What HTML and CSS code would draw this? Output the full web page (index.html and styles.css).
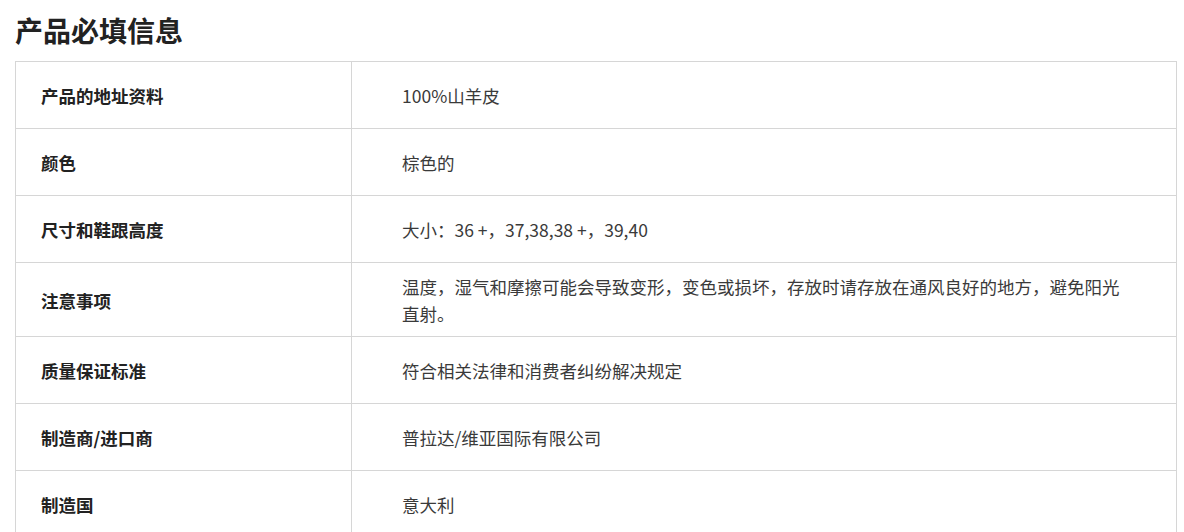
FILE: index.html
```html
<!DOCTYPE html>
<html lang="zh-CN">
<head>
<meta charset="utf-8">
<title>产品必填信息</title>
<link rel="stylesheet" href="styles.css">
</head>
<body>
<section class="info">
  <h2 class="info-title">产品必填信息</h2>
  <table class="info-table">
    <tbody>
      <tr><th>产品的地址资料</th><td>100%山羊皮</td></tr>
      <tr><th>颜色</th><td>棕色的</td></tr>
      <tr><th>尺寸和鞋跟高度</th><td>大小：36 +，37,38,38 +，39,40</td></tr>
      <tr><th>注意事项</th><td>温度，湿气和摩擦可能会导致变形，变色或损坏，存放时请存放在通风良好的地方，避免阳光直射。</td></tr>
      <tr><th>质量保证标准</th><td>符合相关法律和消费者纠纷解决规定</td></tr>
      <tr><th>制造商/进口商</th><td>普拉达/维亚国际有限公司</td></tr>
      <tr><th>制造国</th><td>意大利</td></tr>
    </tbody>
  </table>
</section>
</body>
</html>
```

FILE: styles.css
```css
html, body {
  margin: 0;
  padding: 0;
  background: #fff;
}
body {
  font-family: "Noto Sans CJK SC", "Noto Sans", sans-serif;
  color: #333;
}
.info {
  padding: 0 8px 0 15px;
}
.info-title {
  margin: 0;
  padding-top: 12px;
  height: 61px;
  box-sizing: border-box;
  font-size: 28px;
  line-height: 36px;
  font-weight: 700;
  color: #222;
}
.info-table {
  width: 1162px;
  border-collapse: collapse;
  table-layout: fixed;
}
.info-table th,
.info-table td {
  border: 1px solid #d6d6d6;
  height: 47px;
  padding: 10px 0 9px;
  font-size: 17.5px;
  line-height: 27px;
  vertical-align: middle;
  text-align: left;
}
.info-table th {
  width: 310px;
  padding-left: 25px;
  font-weight: 700;
  color: #222;
}
.info-table td {
  padding-left: 50px;
  padding-right: 40px;
  color: #3a3a3a;
  font-weight: 400;
}
```
